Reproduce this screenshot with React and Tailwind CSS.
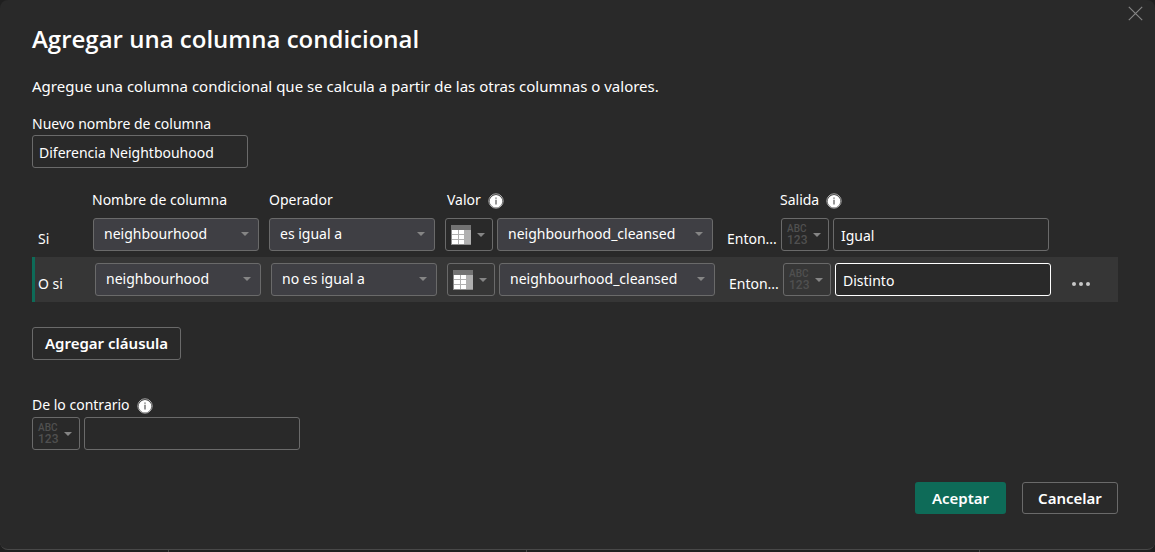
import React from "react";

const CONTROL = "h-[33px] rounded-[3px] border border-[#6a6a6a] text-sm text-white";

function Caret() {
  return (
    <svg width="8" height="4" viewBox="0 0 8 4" aria-hidden="true" className="shrink-0">
      <path d="M0 0h8L4 4z" fill="#858585" />
    </svg>
  );
}

function TableIcon() {
  return (
    <svg width="20" height="20" viewBox="0 0 20 20" aria-hidden="true" className="shrink-0">
      <path d="M0 0h20v20H0z" fill="#b0b0b0" />
      <path d="M0 0h20v5H0z" fill="#737373" />
      <path d="M0 5h1v15H0zM0 19h20v1H0z" fill="#8c8c8c" />
      <path d="M1 5h6v4H1zM8 5h5v4H8zM1 10h6v4H1zM8 10h5v4H8zM1 15h6v4H1zM8 15h5v4H8z" fill="#fff" />
    </svg>
  );
}

function InfoIcon() {
  return (
    <svg width="16" height="16" viewBox="0 0 16 16" aria-hidden="true" className="mt-[2px] shrink-0">
      <circle cx="8" cy="8" r="7.2" fill="#292929" stroke="#a8a8a8" />
      <circle cx="8" cy="8.3" r="6.3" fill="#fff" />
      <path d="M7.5 4.5h1v1.2h-1zM7.5 6.8h1v4.7h-1z" fill="#333" />
    </svg>
  );
}

function AnyTypeIcon() {
  return (
    <span className="flex w-[22px] shrink-0 flex-col text-left font-['Roboto',sans-serif] font-medium text-[#505050]">
      <span className="text-[10px] leading-[11px]">ABC</span>
      <span className="text-xs leading-3">123</span>
    </span>
  );
}

function TypeButton({ kind, label }) {
  return (
    <button
      type="button"
      aria-label={label}
      className={CONTROL + " flex w-12 shrink-0 items-center justify-between pl-[5px] pr-[7px]"}
    >
      {kind === "column" ? <TableIcon /> : <AnyTypeIcon />}
      <Caret />
    </button>
  );
}

function Select({ label, value, width }) {
  return (
    <div className={"relative shrink-0 " + width}>
      <select
        aria-label={label}
        defaultValue={value}
        className={CONTROL + " block w-full appearance-none bg-[#3f3f44] pl-[10px] pr-6 pb-[2px] outline-none"}
      >
        <option>{value}</option>
      </select>
      <span className="pointer-events-none absolute inset-y-0 right-[10px] flex items-center pb-[2px]">
        <Caret />
      </span>
    </div>
  );
}

function Clause({ id, label, active, column, operator, value, output }) {
  return (
    <div
      className={
        active
          ? "flex items-center border-l-[3px] border-[#0e6b58] bg-[#363636] py-[6px] pl-[3px]"
          : "flex items-center py-[6px] pl-[6px]"
      }
    >
      <span className={active ? "w-[57px] shrink-0 pt-2" : "w-[55px] shrink-0 pt-2"}>{label}</span>
      <Select label="Nombre de columna" value={column} width="w-[166px] mr-[10px]" />
      <Select label="Operador" value={operator} width="w-[166px] mr-[10px]" />
      <TypeButton kind="column" label="Tipo de valor" />
      <Select label="Valor" value={value} width="w-[216px] ml-1" />
      <label htmlFor={id} className="ml-[14px] w-[54px] shrink-0 whitespace-nowrap pt-2">
        Enton...
      </label>
      <TypeButton kind="any" label="Tipo de salida" />
      <input
        id={id}
        defaultValue={output}
        className={
          active
            ? "ml-1 h-[33px] w-[216px] shrink-0 rounded-[3px] border border-white bg-[#292929] px-[7px] pt-[2px] text-sm text-white outline-none"
            : CONTROL + " ml-1 w-[216px] shrink-0 bg-[#292929] px-[7px] pt-[2px] outline-none"
        }
      />
      {active && (
        <button type="button" aria-label="Más opciones" className="ml-5 mt-2 flex h-5 w-5 items-center justify-center">
          <svg width="20" height="6" viewBox="0 0 20 6" aria-hidden="true">
            <circle cx="3" cy="3" r="2" fill="#c8c8c8" />
            <circle cx="10" cy="3" r="2" fill="#c8c8c8" />
            <circle cx="17" cy="3" r="2" fill="#c8c8c8" />
          </svg>
        </button>
      )}
    </div>
  );
}

export default function App() {
  return (
    <div className="flex min-h-screen flex-col bg-[#1f1f1f] font-['Noto_Sans','Open_Sans',sans-serif] text-sm leading-5 text-white">
      <main
        role="dialog"
        aria-labelledby="title"
        className="relative rounded-lg border-b border-[#484848] bg-[#292929] pb-[35px] pl-8 pr-[37px] pt-[23px]"
      >
        <button type="button" aria-label="Cerrar" className="absolute right-3 top-[6px]">
          <svg width="15" height="15" viewBox="0 0 15 15" aria-hidden="true">
            <path d="M.8.8l13.4 13.4M14.2.8L.8 14.2" stroke="#858585" strokeWidth="1.2" />
          </svg>
        </button>

        <h1 id="title" className="font-['Open_Sans','Noto_Sans',sans-serif] text-2xl font-semibold leading-8">
          Agregar una columna condicional
        </h1>
        <p className="mt-[21px] text-[15px]">
          Agregue una columna condicional que se calcula a partir de las otras columnas o valores.
        </p>

        <label htmlFor="name" className="mt-[18px] block">
          Nuevo nombre de columna
        </label>
        <input
          id="name"
          defaultValue="Diferencia Neightbouhood"
          className={CONTROL + " mt-px block w-[216px] bg-transparent px-[6px] pt-[2px] outline-none"}
        />

        <div className="mt-[22px] flex pl-[60px]">
          <span className="w-[177px]">Nombre de columna</span>
          <span className="w-[178px]">Operador</span>
          <span className="flex w-[333px] items-center gap-[7px]">
            Valor <InfoIcon />
          </span>
          <span className="flex items-center gap-[7px]">
            Salida <InfoIcon />
          </span>
        </div>

        <div className="mt-[2px]">
          <Clause id="out-1" label="Si" column="neighbourhood" operator="es igual a" value="neighbourhood_cleansed" output="Igual" />
          <Clause id="out-2" label="O si" active column="neighbourhood" operator="no es igual a" value="neighbourhood_cleansed" output="Distinto" />
        </div>

        <button type="button" className="mt-[25px] h-[33px] rounded-[3px] border border-[#6a6a6a] px-3 pb-[2px] text-[15px] font-semibold">
          Agregar cláusula
        </button>

        <div className="mt-[35px] flex items-center gap-[7px]">
          <label htmlFor="otherwise">De lo contrario</label>
          <InfoIcon />
        </div>
        <div className="mt-[2px] flex gap-1">
          <TypeButton kind="any" label="Tipo de valor contrario" />
          <input id="otherwise" className={CONTROL + " w-[216px] bg-transparent px-[7px] outline-none"} />
        </div>

        <div className="mt-8 flex justify-end gap-4">
          <button type="button" className="h-8 w-[91px] rounded-[3px] bg-[#0e6b58] text-[15px] font-semibold">
            Aceptar
          </button>
          <button type="button" className="h-8 w-24 rounded-[3px] border border-[#6a6a6a] text-[15px] font-semibold">
            Cancelar
          </button>
        </div>
      </main>
      <div className="flex flex-1" aria-hidden="true">
        <div className="w-[169px] border-r border-[#484848]" />
        <div className="w-[358px] border-r border-[#484848]" />
        <div className="w-[453px] border-r border-[#484848]" />
      </div>
    </div>
  );
}
